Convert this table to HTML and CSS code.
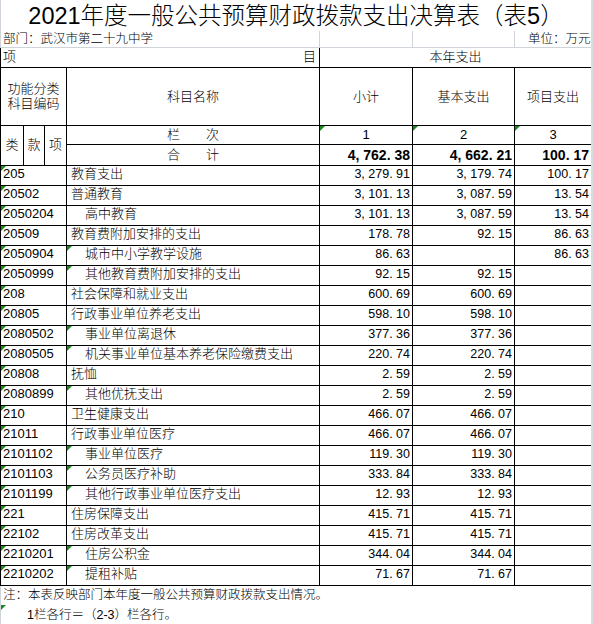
FILE: index.html
```html
<!DOCTYPE html>
<html lang="zh-CN">
<head>
<meta charset="utf-8">
<title>2021年度一般公共预算财政拨款支出决算表（表5）</title>
<link rel="stylesheet" href="styles.css">
</head>
<body>
<div class="sheet">
  <div class="title">2021年度一般公共预算财政拨款支出决算表（表5）</div>
  <table class="grid">
    <colgroup>
      <col class="c-lei"><col class="c-kuan"><col class="c-xiang"><col class="c-name"><col class="c-sub"><col class="c-basic"><col class="c-proj">
    </colgroup>
    <tr class="r-dept">
      <td colspan="4" class="dept">部门：武汉市第二十九中学</td>
      <td class="dept"></td>
      <td class="dept"></td>
      <td class="dept unit">单位：万元</td>
    </tr>
    <tr class="r-head1">
      <td colspan="4" class="h-item"><div class="split"><span>项</span><span>目</span></div></td>
      <td colspan="3" class="h-center">本年支出</td>
    </tr>
    <tr class="r-head2">
      <td colspan="3" class="h-center">功能分类<br>科目编码</td>
      <td class="h-center">科目名称</td>
      <td class="h-center">小计</td>
      <td class="h-center">基本支出</td>
      <td class="h-center">项目支出</td>
    </tr>
    <tr class="r-head3">
      <td rowspan="2" class="h-center">类</td>
      <td rowspan="2" class="h-center">款</td>
      <td rowspan="2" class="h-center">项</td>
      <td class="h-center">栏　　次</td>
      <td class="h-center tri">1</td>
      <td class="h-center tri">2</td>
      <td class="h-center tri">3</td>
    </tr>
    <tr class="r-head4">
      <td class="h-center">合　　计</td>
      <td class="num bold">4, 762. 38</td>
      <td class="num bold">4, 662. 21</td>
      <td class="num bold">100. 17</td>
    </tr>
    <tr class="r-data"><td colspan="3" class="code tri">205</td><td class="name">教育支出</td><td class="num">3, 279. 91</td><td class="num">3, 179. 74</td><td class="num">100. 17</td></tr>
    <tr class="r-data"><td colspan="3" class="code tri">20502</td><td class="name">普通教育</td><td class="num">3, 101. 13</td><td class="num">3, 087. 59</td><td class="num">13. 54</td></tr>
    <tr class="r-data"><td colspan="3" class="code tri">2050204</td><td class="name sub">高中教育</td><td class="num">3, 101. 13</td><td class="num">3, 087. 59</td><td class="num">13. 54</td></tr>
    <tr class="r-data"><td colspan="3" class="code tri">20509</td><td class="name">教育费附加安排的支出</td><td class="num">178. 78</td><td class="num">92. 15</td><td class="num">86. 63</td></tr>
    <tr class="r-data"><td colspan="3" class="code tri">2050904</td><td class="name sub tri">城市中小学教学设施</td><td class="num">86. 63</td><td class="num"></td><td class="num">86. 63</td></tr>
    <tr class="r-data"><td colspan="3" class="code tri">2050999</td><td class="name sub tri">其他教育费附加安排的支出</td><td class="num">92. 15</td><td class="num">92. 15</td><td class="num"></td></tr>
    <tr class="r-data"><td colspan="3" class="code tri">208</td><td class="name">社会保障和就业支出</td><td class="num">600. 69</td><td class="num">600. 69</td><td class="num"></td></tr>
    <tr class="r-data"><td colspan="3" class="code tri">20805</td><td class="name">行政事业单位养老支出</td><td class="num">598. 10</td><td class="num">598. 10</td><td class="num"></td></tr>
    <tr class="r-data"><td colspan="3" class="code tri">2080502</td><td class="name sub tri">事业单位离退休</td><td class="num">377. 36</td><td class="num">377. 36</td><td class="num"></td></tr>
    <tr class="r-data"><td colspan="3" class="code tri">2080505</td><td class="name sub tri">机关事业单位基本养老保险缴费支出</td><td class="num">220. 74</td><td class="num">220. 74</td><td class="num"></td></tr>
    <tr class="r-data"><td colspan="3" class="code tri">20808</td><td class="name">抚恤</td><td class="num">2. 59</td><td class="num">2. 59</td><td class="num"></td></tr>
    <tr class="r-data"><td colspan="3" class="code tri">2080899</td><td class="name sub tri">其他优抚支出</td><td class="num">2. 59</td><td class="num">2. 59</td><td class="num"></td></tr>
    <tr class="r-data"><td colspan="3" class="code tri">210</td><td class="name">卫生健康支出</td><td class="num">466. 07</td><td class="num">466. 07</td><td class="num"></td></tr>
    <tr class="r-data"><td colspan="3" class="code tri">21011</td><td class="name">行政事业单位医疗</td><td class="num">466. 07</td><td class="num">466. 07</td><td class="num"></td></tr>
    <tr class="r-data"><td colspan="3" class="code tri">2101102</td><td class="name sub tri">事业单位医疗</td><td class="num">119. 30</td><td class="num">119. 30</td><td class="num"></td></tr>
    <tr class="r-data"><td colspan="3" class="code tri">2101103</td><td class="name sub tri">公务员医疗补助</td><td class="num">333. 84</td><td class="num">333. 84</td><td class="num"></td></tr>
    <tr class="r-data"><td colspan="3" class="code tri">2101199</td><td class="name sub tri">其他行政事业单位医疗支出</td><td class="num">12. 93</td><td class="num">12. 93</td><td class="num"></td></tr>
    <tr class="r-data"><td colspan="3" class="code tri">221</td><td class="name">住房保障支出</td><td class="num">415. 71</td><td class="num">415. 71</td><td class="num"></td></tr>
    <tr class="r-data"><td colspan="3" class="code tri">22102</td><td class="name">住房改革支出</td><td class="num">415. 71</td><td class="num">415. 71</td><td class="num"></td></tr>
    <tr class="r-data"><td colspan="3" class="code tri">2210201</td><td class="name sub tri">住房公积金</td><td class="num">344. 04</td><td class="num">344. 04</td><td class="num"></td></tr>
    <tr class="r-data"><td colspan="3" class="code tri">2210202</td><td class="name sub tri">提租补贴</td><td class="num">71. 67</td><td class="num">71. 67</td><td class="num"></td></tr>
    <tr class="r-note"><td colspan="7" class="note">注：本表反映部门本年度一般公共预算财政拨款支出情况。</td></tr>
    <tr class="r-note"><td colspan="7" class="note note2 tri">1栏各行＝（2-3）栏各行。</td></tr>
  </table>
</div>
</body>
</html>
```
FILE: styles.css
```css
* { box-sizing: border-box; }
html, body { margin: 0; padding: 0; }
body {
  width: 593px;
  height: 624px;
  overflow: hidden;
  background: #d8dce3;
  font-family: "Liberation Sans", "Noto Sans CJK SC", sans-serif;
  font-weight: 300;
  color: #000;
}
.sheet {
  width: 591px;
  height: 624px;
  background: #fff;
  overflow: hidden;
}
.title {
  height: 31px;
  line-height: 32px;
  text-align: center;
  font-size: 23.5px;
  border-left: 1px solid #cfd3da;
  white-space: nowrap;
}
.grid {
  width: 591px;
  table-layout: fixed;
  border-collapse: collapse;
  font-size: 13px;
}
.c-lei { width: 23px; }
.c-kuan { width: 21px; }
.c-xiang { width: 22px; }
.c-name { width: 253px; }
.c-sub { width: 93px; }
.c-basic { width: 102px; }
.c-proj { width: 77px; }
.grid td {
  border: 1px solid #000;
  padding: 0 2px;
  line-height: 14px;
  white-space: nowrap;
  overflow: hidden;
}
.r-dept { height: 16px; }
.r-dept td.dept {
  border: none;
  border-right: 1px solid #cfd3da;
  font-size: 12.5px;
  line-height: 15px;
  vertical-align: bottom;
  padding: 0 1px 0 2px;
}
.r-dept td.dept:first-child { border-left: 1px solid #cfd3da; }
.r-dept td.unit { text-align: right; border-right: none; }
.r-head1 { height: 20px; }
.r-head1 td { border-top-color: #cfd3da; }
.split {
  display: flex;
  justify-content: space-between;
  padding-right: 1px;
}
.r-head2 { height: 58px; }
.r-head2 td { line-height: 15px; }
.r-head3 { height: 19px; }
.r-head4 { height: 21px; }
.h-center { text-align: center; vertical-align: middle; }
.r-data { height: 20px; }
.r-data td { vertical-align: top; padding-top: 1px; }
.code { font-size: 13px; }
.name { font-size: 13px; }
.grid td.name { padding-left: 4px; }
.grid td.name.sub { padding-left: 18px; }
.num {
  text-align: right;
  font-size: 12.5px;
}
.grid td.num { padding-right: 2px; }
.num.bold {
  font-weight: bold;
  font-size: 14px;
  vertical-align: middle;
}
.r-note { height: 20px; }
.r-note td.note {
  border: none;
  border-left: 1px solid #cfd3da;
  font-size: 12.5px;
  vertical-align: middle;
}
.grid td.note2 { padding-left: 26px; }
.tri { position: relative; }
.tri::before {
  content: "";
  position: absolute;
  left: 0;
  top: 0;
  border-top: 5px solid #1a8a1a;
  border-right: 5px solid transparent;
}
```
